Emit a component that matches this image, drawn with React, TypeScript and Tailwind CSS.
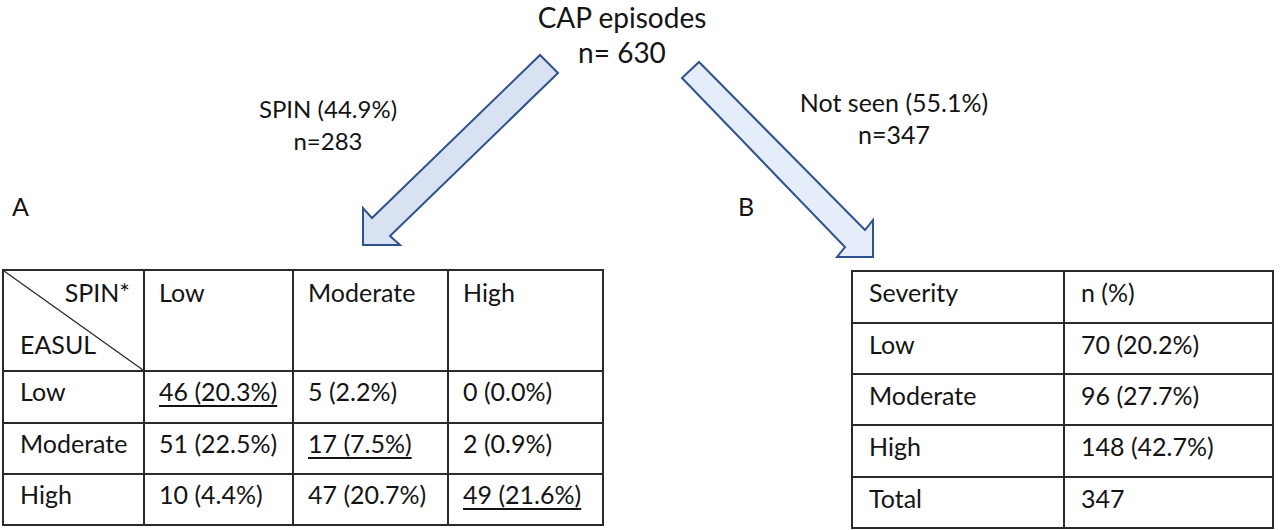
import React from "react";

const spinRows = [
  { label: "Low", cells: ["46 (20.3%)", "5 (2.2%)", "0 (0.0%)"], diag: 0, h: "h-[52px]" },
  { label: "Moderate", cells: ["51 (22.5%)", "17 (7.5%)", "2 (0.9%)"], diag: 1, h: "h-[51px]" },
  { label: "High", cells: ["10 (4.4%)", "47 (20.7%)", "49 (21.6%)"], diag: 2, h: "h-[51px]" },
];

const severityRows = [
  { cells: ["Severity", "n (%)"], h: "h-[52px]" },
  { cells: ["Low", "70 (20.2%)"], h: "h-[51px]" },
  { cells: ["Moderate", "96 (27.7%)"], h: "h-[51px]" },
  { cells: ["High", "148 (42.7%)"], h: "h-[52px]" },
  { cells: ["Total", "347"], h: "h-[51px]" },
];

function Arrows() {
  return (
    <svg className="absolute inset-0 pointer-events-none" width="1280" height="530" viewBox="0 0 1280 530">
      {/* SPIN arrow, down-left */}
      <polygon
        points="540,55 558,73 390,236 400,245 363,245 363,208 372,218"
        fill="#d9e2f3"
        stroke="#2f528f"
        strokeWidth="2"
      />
      {/* Not seen arrow, down-right */}
      <polygon
        points="699,62 865,230 873,220 873,257 837,257 845,247 682,78"
        fill="#e4edf9"
        stroke="#2f528f"
        strokeWidth="2"
      />
    </svg>
  );
}

export default function App() {
  return (
    <div className="relative w-[1280px] h-[530px] overflow-hidden bg-white text-[#141414] font-['Lato','Liberation_Sans',sans-serif]">
      <Arrows />

      {/* title */}
      <div className="relative flex flex-col items-center pr-[36px] text-[28px] leading-[35px]">
        <div>CAP episodes</div>
        <div>n= 630</div>
      </div>

      {/* branch labels */}
      <div className="relative flex items-start">
        <div className="w-[656px] mt-[23px] text-center text-[24px] leading-[32px]">
          <div>SPIN (44.9%)</div>
          <div>n=283</div>
        </div>
        <div className="w-[476px] mt-[16px] text-center text-[25px] leading-[32px]">
          <div>Not seen (55.1%)</div>
          <div>n=347</div>
        </div>
      </div>

      {/* panel letters */}
      <div className="relative flex text-[25px] leading-[30px] mt-[34px]">
        <div className="w-[738px] pl-[12px]">A</div>
        <div>B</div>
      </div>

      {/* tables */}
      <div className="relative flex items-start mt-[48px] text-[25px] leading-[30px]">
        <table className="ml-[2px] w-[600px] table-fixed border-collapse">
          <colgroup>
            <col className="w-[141px]" />
            <col className="w-[149px]" />
            <col className="w-[155px]" />
            <col className="w-[155px]" />
          </colgroup>
          <tbody>
            <tr className="h-[101px]">
              <td className="relative border-2 border-[#2a2a2a] p-0 align-top">
                <svg className="absolute inset-0 w-full h-full" preserveAspectRatio="none" viewBox="0 0 100 100">
                  <line x1="0" y1="0" x2="100" y2="100" stroke="#2a2a2a" strokeWidth="1.3" vectorEffect="non-scaling-stroke" />
                </svg>
                <div className="relative flex flex-col h-[99px]">
                  <div className="text-right pr-[13px] pt-[6px]">SPIN*</div>
                  <div className="pl-[16px] mt-[22px]">EASUL</div>
                </div>
              </td>
              {["Low", "Moderate", "High"].map((h) => (
                <td key={h} className="border-2 border-[#2a2a2a] align-top pl-[14px] pt-[6px]">
                  {h}
                </td>
              ))}
            </tr>
            {spinRows.map((r) => (
              <tr key={r.label} className={r.h}>
                <td className="border-2 border-[#2a2a2a] align-top pl-[16px] pt-[4px]">{r.label}</td>
                {r.cells.map((c, i) => (
                  <td key={i} className="border-2 border-[#2a2a2a] align-top pl-[14px] pt-[4px] whitespace-nowrap">
                    {i === r.diag ? (
                      <span className="underline decoration-[1.5px] underline-offset-[4px]">{c}</span>
                    ) : (
                      c
                    )}
                  </td>
                ))}
              </tr>
            ))}
          </tbody>
        </table>

        <table className="ml-[247px] mt-[1px] w-[421px] table-fixed border-collapse">
          <colgroup>
            <col className="w-[212px]" />
            <col className="w-[209px]" />
          </colgroup>
          <tbody>
            {severityRows.map((r) => (
              <tr key={r.cells[0]} className={r.h}>
                <td className="border-2 border-[#2a2a2a] align-top pl-[16px] pt-[5px]">{r.cells[0]}</td>
                <td className="border-2 border-[#2a2a2a] align-top pl-[16px] pt-[5px]">{r.cells[1]}</td>
              </tr>
            ))}
          </tbody>
        </table>
      </div>
    </div>
  );
}
